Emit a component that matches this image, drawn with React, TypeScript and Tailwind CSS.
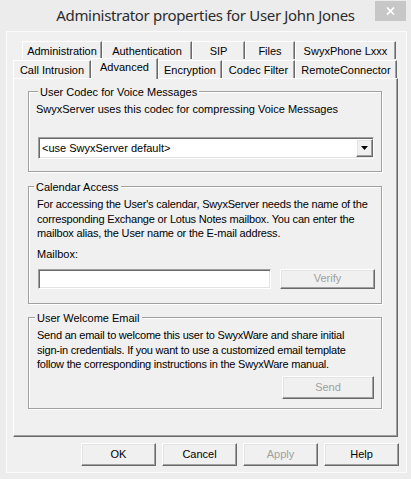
import React from "react";

const raised =
  "border border-t-white border-l-white border-r-[#696969] border-b-[#696969] shadow-[inset_-1px_-1px_0_#a0a0a0,inset_1px_1px_0_#e3e3e3]";
const sunken =
  "border border-t-[#a0a0a0] border-l-[#a0a0a0] border-r-white border-b-white shadow-[inset_1px_1px_0_#696969,inset_-1px_-1px_0_#e3e3e3]";

function Tab({ label, w, active }: { label: string; w: string; active?: boolean }) {
  if (active) {
    return (
      <div
        className={`${w} relative z-10 -mb-[1px] h-[21px] bg-[#f0f0f0] border-t border-l border-t-white border-l-white border-r border-r-[#696969] shadow-[inset_-1px_0_0_#a0a0a0] flex justify-center pt-[1px] leading-[14px]`}
      >
        {label}
      </div>
    );
  }
  return (
    <div
      className={`${w} h-[18px] border-t border-l border-t-white border-l-white border-r border-r-[#696969] shadow-[inset_-1px_0_0_#a0a0a0] flex justify-center pt-[2px] leading-[14px]`}
    >
      {label}
    </div>
  );
}

function GroupBox({
  title,
  titleOffset,
  className,
  children,
}: {
  title: string;
  titleOffset: string;
  className: string;
  children: React.ReactNode;
}) {
  return (
    <div
      className={`${className} ml-[14px] w-[354px] box-border border border-[#a0a0a0] shadow-[1px_1px_0_white,inset_1px_1px_0_white] flex flex-col`}
    >
      <div className={`-mt-[7px] ${titleOffset} px-[2px] w-fit bg-[#f0f0f0] leading-[14px]`}>{title}</div>
      {children}
    </div>
  );
}

function Button({ label, disabled, className = "" }: { label: string; disabled?: boolean; className?: string }) {
  return (
    <div
      className={`${className} ${raised} bg-[#f0f0f0] flex items-center justify-center ${
        disabled ? "text-[#a0a0a0]" : "text-black"
      }`}
    >
      {label}
    </div>
  );
}

export default function App() {
  return (
    <div className="w-[411px] h-[479px] bg-[#ececec] font-['Liberation_Sans',Arial,sans-serif] text-[11px] text-black flex flex-col select-none">
      {/* Title bar */}
      <div className="h-[31px] grid grid-cols-[1fr_auto_1fr]">
        <div />
        <div className="pt-[5px] font-['Noto_Sans',sans-serif] text-[15px] tracking-[-0.33px] leading-[20px] text-[#2b2b2b] whitespace-nowrap">
          Administrator properties for User John Jones
        </div>
        <div className="flex justify-end items-start">
          <div className="mt-[1px] mr-[5px] w-[31px] h-[20px] bg-[#c7c7c7] flex items-center justify-center">
            <svg width="9" height="8" viewBox="0 0 9 8">
              <path d="M1 0.5 L8 7.5 M8 0.5 L1 7.5" stroke="white" strokeWidth="1.7" fill="none" />
            </svg>
          </div>
        </div>
      </div>

      {/* Client area */}
      <div className="ml-[6px] w-[401px] h-[442px] border border-[#fbfbfb] bg-[#f0f0f0] flex flex-col">
        <div className="pl-[6px] pt-[9px] flex flex-col">
          {/* Tab rows */}
          <div className="ml-[9px] flex">
            <Tab label="Administration" w="w-[80px]" />
            <Tab label="Authentication" w="w-[90px]" />
            <Tab label="SIP" w="w-[53px]" />
            <Tab label="Files" w="w-[50px]" />
            <Tab label="SwyxPhone Lxxx" w="w-[101px]" />
          </div>
          <div className="h-[19px] flex items-end">
            <Tab label="Call Intrusion" w="w-[78px]" />
            <Tab label="Advanced" w="w-[67px]" active />
            <Tab label="Encryption" w="w-[64px]" />
            <Tab label="Codec Filter" w="w-[73px]" />
            <Tab label="RemoteConnector" w="w-[102px]" />
          </div>

          {/* Tab page */}
          <div className="w-[385px] h-[359px] border border-t-white border-l-white border-r-[#696969] border-b-[#696969] shadow-[inset_-1px_-1px_0_#a0a0a0] flex flex-col">
            <GroupBox title="User Codec for Voice Messages" titleOffset="ml-[9px]" className="mt-[12px] h-[81px]">
              <div className="mt-[3px] ml-[7px] leading-[14px]">
                SwyxServer uses this codec for compressing Voice Messages
              </div>
              <div className={`mt-[21px] ml-[9px] w-[336px] h-[22px] bg-white ${sunken} flex items-center`}>
                <div className="flex-1 pl-[3px] leading-[14px]">&lt;use SwyxServer default&gt;</div>
                <div className={`w-[17px] h-[18px] ${raised} bg-[#f0f0f0] flex items-center justify-center`}>
                  <svg width="7" height="4" viewBox="0 0 7 4">
                    <path d="M0 0 H7 L3.5 4 Z" fill="black" />
                  </svg>
                </div>
              </div>
            </GroupBox>

            <GroupBox title="Calendar Access" titleOffset="ml-[5px]" className="mt-[14px] h-[118px]">
              <div className="mt-[3px] ml-[8px] leading-[14.5px] tracking-[-0.18px]">
                For accessing the User's calendar, SwyxServer needs the name of the
                <br />
                corresponding Exchange or Lotus Notes mailbox. You can enter the
                <br />
                mailbox alias, the User name or the E-mail address.
              </div>
              <div className="mt-[6px] ml-[8px] leading-[14px]">Mailbox:</div>
              <div className="mt-[8px] ml-[9px] flex">
                <div className={`w-[233px] h-[20px] bg-white ${sunken}`} />
                <Button label="Verify" disabled className="ml-[9px] w-[95px] h-[20px]" />
              </div>
            </GroupBox>

            <GroupBox title="User Welcome Email" titleOffset="ml-[6px]" className="mt-[13px] h-[92px]">
              <div className="mt-[3px] ml-[8px] leading-[14.5px] tracking-[-0.22px]">
                Send an email to welcome this user to SwyxWare and share initial
                <br />
                sign-in credentials. If you want to use a customized email template
                <br />
                follow the corresponding instructions in the SwyxWare manual.
              </div>
              <Button label="Send" disabled className="mt-[4px] ml-[253px] w-[92px] h-[23px]" />
            </GroupBox>
          </div>

          {/* Dialog buttons */}
          <div className="mt-[6px] ml-[68px] flex gap-[6px]">
            <Button label="OK" className="w-[75px] h-[23px]" />
            <Button label="Cancel" className="w-[75px] h-[23px]" />
            <Button label="Apply" disabled className="w-[75px] h-[23px]" />
            <Button label="Help" className="w-[75px] h-[23px]" />
          </div>
        </div>
      </div>
    </div>
  );
}
